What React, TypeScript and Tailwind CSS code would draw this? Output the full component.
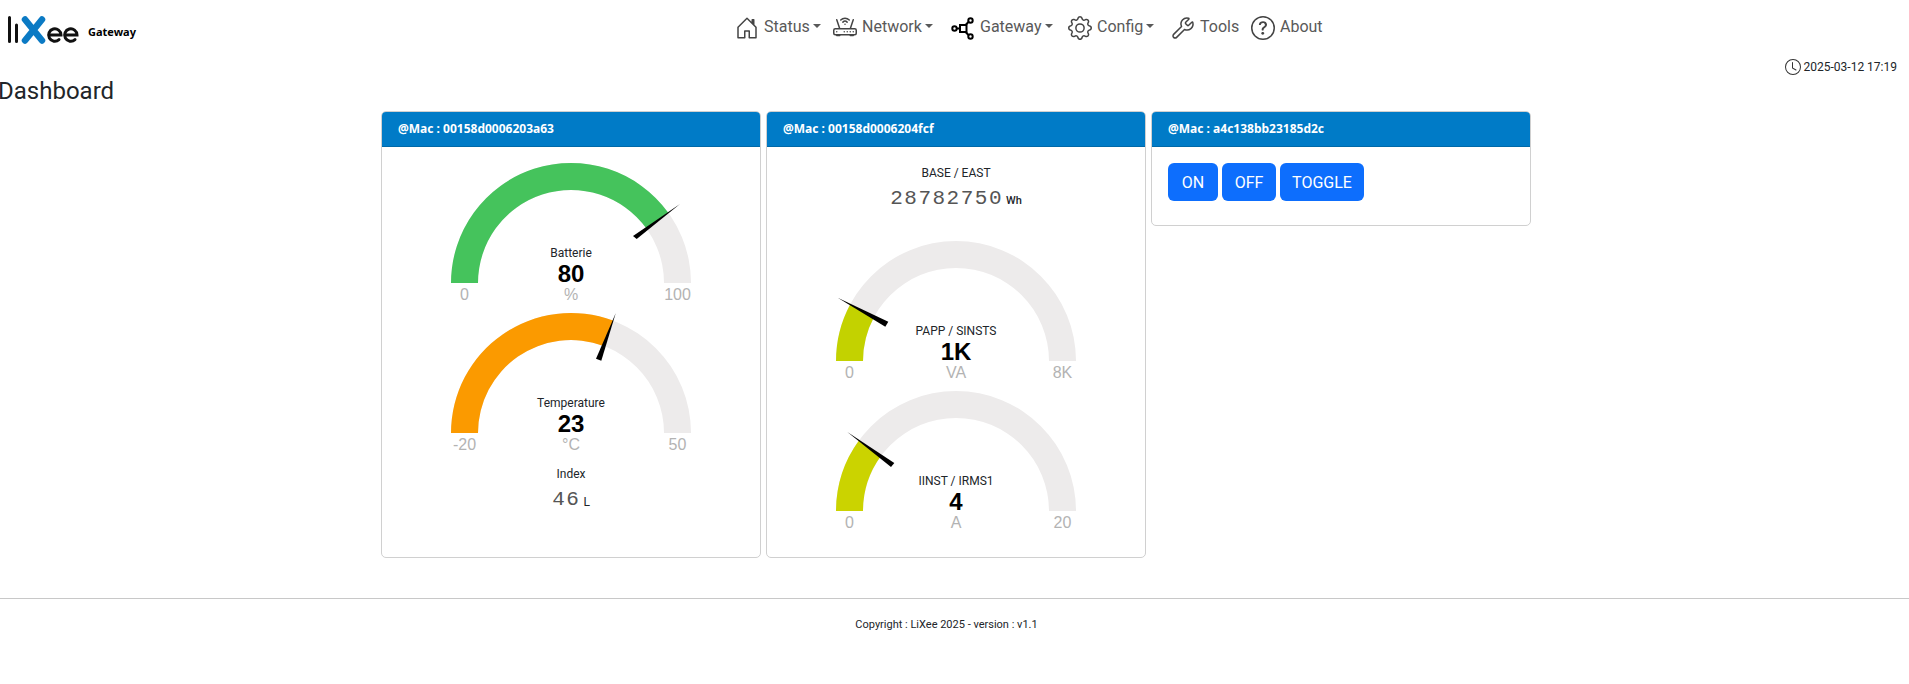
import { BsClock, BsGear, BsHouseDoor, BsQuestionCircle, BsRouter } from "react-icons/bs";
import { Wrench } from "lucide-react";
import type { ReactNode } from "react";

type Pt = [number, number];

type GaugeProps = {
  title: string;
  value: string;
  unit: string;
  min: string;
  max: string;
  fraction: number;
  color: string;
  needle: [Pt, Pt, Pt];
};

const R = 120;
const r = 93;
const CX = 150;
const CY = 130;

function arcPath(fraction: number) {
  const a = Math.PI * (1 - fraction);
  const cos = Math.cos(a);
  const sin = Math.sin(a);
  return `M${CX - R} ${CY} A${R} ${R} 0 0 1 ${CX + R * cos} ${CY - R * sin} L${CX + r * cos} ${CY - r * sin} A${r} ${r} 0 0 0 ${CX - r} ${CY} Z`;
}

function Gauge({ title, value, unit, min, max, fraction, color, needle }: GaugeProps) {
  const points = needle.map(([x, y]) => `${CX + x},${CY + y}`).join(" ");
  return (
    <svg width={300} height={150} className="mx-auto block shrink-0" viewBox="0 0 300 150">
      <path d={arcPath(1)} fill="#edebeb" />
      <path d={arcPath(fraction)} fill={color} />
      <polygon points={points} fill="#000" />
      <text x={CX} y={CY - 26} textAnchor="middle" fontSize={12} fill="#212529">{title}</text>
      <text x={CX} y={CY - 1} textAnchor="middle" fontSize={24} fontWeight={700} fontFamily="Liberation Sans" fill="#000">{value}</text>
      <g fontFamily="Liberation Sans" fontSize={16} fill="#b3b3b3" textAnchor="middle">
        <text x={CX - 106.5} y={CY + 17}>{min}</text>
        <text x={CX} y={CY + 17}>{unit}</text>
        <text x={CX + 106.5} y={CY + 17}>{max}</text>
      </g>
    </svg>
  );
}

function Counter({ label, value, unit, unitClass, top }: { label: string; value: string; unit: string; unitClass: string; top: string }) {
  return (
    <div className={`flex flex-col items-center text-[#212529] ${top}`}>
      <div className="h-[18px] text-xs leading-[18px]">{label}</div>
      <div className="flex h-[34px] items-center">
        <span className="font-['Liberation_Mono',monospace] text-[21px] tracking-[1.5px] text-[#555]">{value}</span>
        <span className={`mt-1 ml-[3px] ${unitClass}`}>{unit}</span>
      </div>
    </div>
  );
}

function Card({ mac, children, className }: { mac: string; children: ReactNode; className?: string }) {
  return (
    <div className={`w-[380px] overflow-hidden rounded-[5px] border border-[#d0d0d0] ${className ?? ""}`}>
      <div className="flex h-[35px] items-center border-b border-[#0069a8] bg-[#007bc7] px-4 font-['Noto_Sans',sans-serif] text-xs font-bold text-white">
        @Mac : {mac}
      </div>
      {children}
    </div>
  );
}

function NavItem({ icon, label, caret, className }: { icon: ReactNode; label: string; caret?: boolean; className: string }) {
  return (
    <div className={`flex items-center text-[#595959] ${className}`}>
      <span className="mt-[2px] flex w-6 shrink-0 justify-center">{icon}</span>
      <span className="ml-[5px] text-base">{label}</span>
      {caret && <span className="mb-[3px] ml-[3px] h-0 w-0 border-x-[4.5px] border-t-[4.5px] border-x-transparent border-t-[#595959]" />}
    </div>
  );
}

function GatewayIcon() {
  return (
    <svg width={23} height={24} viewBox="0 0 23 24" fill="none" stroke="#000" strokeWidth={2} className="-ml-[2px]">
      <circle cx={3.5} cy={12.5} r={2.2} />
      <rect x={9} y={9} width={6.5} height={7} />
      <path d="M6 12.5h3M14.5 9l3.5-3.5M14.5 16l3.5 3.5" />
      <circle cx={19.5} cy={4.5} r={2.2} />
      <circle cx={19.5} cy={20.5} r={2.2} />
    </svg>
  );
}

function Logo() {
  return (
    <svg width={80} height={36} viewBox="0 0 80 36" className="shrink-0" fill="none">
      <path d="M9.5 8.5V32.5M16.5 16V32.5" stroke="#111" strokeWidth={3} strokeLinecap="round" />
      <path d="M25 10.5L42 31.5M42 10.5L25 31.5" stroke="#0b7ac4" strokeWidth={6.5} strokeLinecap="round" />
      <path d="M49 26H61A6.2 6.2 0 1 0 59 30.6" stroke="#111" strokeWidth={3} strokeLinecap="round" />
      <path d="M65 26H77A6.2 6.2 0 1 0 75 30.6" stroke="#111" strokeWidth={3} strokeLinecap="round" />
    </svg>
  );
}

export default function App() {
  return (
    <div className="min-h-[684px] w-[1909px] overflow-hidden bg-white font-['Roboto',sans-serif] text-[#212529]">
      <nav className="flex h-[54px] items-center">
        <div className="flex w-[735px] items-center">
          <Logo />
          <span className="mt-[11px] ml-2 font-['Noto_Sans',sans-serif] text-[11px] font-bold text-black">Gateway</span>
        </div>
        <div className="flex items-center">
          <NavItem className="w-[98px]" label="Status" caret icon={<BsHouseDoor size={24} className="text-[#444]" />} />
          <NavItem className="w-[118px]" label="Network" caret icon={<BsRouter size={24} className="text-[#444]" />} />
          <NavItem className="w-[117px]" label="Gateway" caret icon={<GatewayIcon />} />
          <NavItem className="w-[103px]" label="Config" caret icon={<BsGear size={24} className="text-[#444]" />} />
          <NavItem className="w-[80px]" label="Tools" icon={<Wrench size={24} strokeWidth={1.5} className="text-[#444]" />} />
          <NavItem className="w-[80px]" label="About" icon={<BsQuestionCircle size={24} className="text-[#444]" />} />
        </div>
      </nav>

      <div className="mt-px flex h-[23px] items-center justify-end gap-[3px] pr-3 text-xs">
        <BsClock size={16} className="text-[#333]" />
        <span>2025-03-12 17:19</span>
      </div>

      <h4 className="-ml-[2px] h-[33px] text-2xl leading-[27px]">Dashboard</h4>

      <div className="flex items-start gap-[5px] pl-[381px]">
        <Card mac="00158d0006203a63" className="h-[447px]">
          <div className="pt-[6px]">
            <Gauge title="Batterie" value="80" unit="%" min="0" max="100" fraction={0.8} color="#45c35c" needle={[[109, -79], [62, -47], [65.7, -44]]} />
            <Gauge title="Temperature" value="23" unit="°C" min="-20" max="50" fraction={0.614} color="#fb9a00" needle={[[44.7, -119.7], [25, -74.3], [30.3, -72.3]]} />
            <Counter label="Index" value="46" unit="L" unitClass="text-xs" top="pt-[12px]" />
          </div>
        </Card>
        <Card mac="00158d0006204fcf" className="h-[447px]">
          <Counter label="BASE / EAST" value="28782750" unit="Wh" unitClass="text-[11px] font-medium" top="pt-[17px] mb-[15px]" />
          <Gauge title="PAPP / SINSTS" value="1K" unit="VA" min="0" max="8K" fraction={0.156} color="#c3d200" needle={[[-118.3, -63.3], [-70.7, -34.3], [-67.7, -39.3]]} />
          <Gauge title="IINST / IRMS1" value="4" unit="A" min="0" max="20" fraction={0.2} color="#cbd300" needle={[[-108.7, -79], [-65, -44], [-61.7, -48]]} />
        </Card>
        <Card mac="a4c138bb23185d2c" className="h-[115px]">
          <div className="flex gap-1 px-4 pt-4">
            <button className="h-[38px] w-[50px] rounded-md bg-[#0d6efd] pt-px text-base text-white">ON</button>
            <button className="h-[38px] w-[54px] rounded-md bg-[#0d6efd] pt-px text-base text-white">OFF</button>
            <button className="h-[38px] w-[84px] rounded-md bg-[#0d6efd] pt-px text-base text-white">TOGGLE</button>
          </div>
        </Card>
      </div>

      <footer className="mt-[40px] border-t border-[#c8c8c8] pt-[18px] pr-4 text-center text-[11px] leading-4">
        Copyright : LiXee 2025 - version : v1.1
      </footer>
    </div>
  );
}
